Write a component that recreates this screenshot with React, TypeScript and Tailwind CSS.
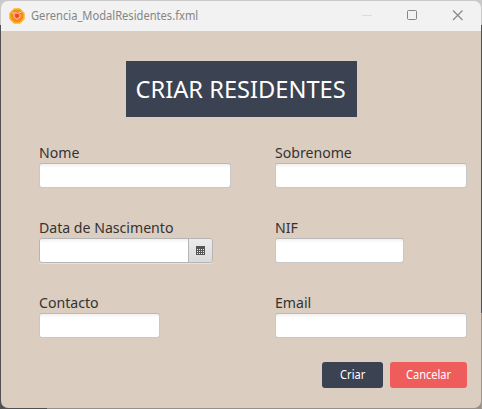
import type { ReactNode } from "react";

function AppIcon() {
  return (
    <svg width="16" height="16" viewBox="0 0 16 16" className="shrink-0">
      <path d="M5 .3h6L15.700 5v6L11 15.700H5L.3 11V5z" fill="#f9b626" />
      <circle cx="8" cy="8" r="6.500" fill="#fa8c12" />
      <path d="M3.800 4.700 8 4l4.300 1.200-.8 4.800L8 12.200 4.800 10z" fill="#f4611c" />
      <path d="M3 4.600 5 5.600 5 9.200 8 11.300 11 9.200 11 6M5 4.800l5 .4L12.500 4" fill="none" stroke="#ffe3d2" strokeWidth=".9" />
      <circle cx="8" cy="7.800" r="1.600" fill="#f2441b" />
    </svg>
  );
}

function TitleBar() {
  return (
    <header className="flex h-[30px] items-center bg-[#f2f2f2] pl-2">
      <AppIcon />
      <span className="ml-[6px] origin-left scale-x-[0.928] text-[12px] leading-4 whitespace-nowrap text-[#858585]">
        Gerencia_ModalResidentes.fxml
      </span>
      <svg width="120" height="30" viewBox="0 0 120 30" fill="none" className="ml-auto">
        <path d="M1 14.500h10" stroke="#dcdcdc" />
        <rect x="46.500" y="9.500" width="9" height="9" rx="1" stroke="#858585" />
        <path d="m92 9.500 9.500 9.500m0-9.500L92 19" stroke="#858585" strokeWidth="1.100" />
      </svg>
    </header>
  );
}

function Field({ label, children }: { label: string; children: ReactNode }) {
  return (
    <label className="flex h-[75px] flex-col items-start">
      <span className="h-5 origin-left scale-x-[0.94] text-[15px] leading-[18px] whitespace-nowrap text-[#333]">{label}</span>
      {children}
    </label>
  );
}

const box =
  "h-[25px] rounded-[3px] border border-[#c8c8c8] border-t-[#b9b9b9] bg-[linear-gradient(#f0f0f0,#fff_4px)] outline-none";

function DateBox() {
  return (
    <div className="flex h-[25px] w-[174px] overflow-hidden rounded-[3px] border border-[#b5b5b5] shadow-[0_1px_0_#e8e2dc]">
      <input className="w-[148px] bg-[linear-gradient(#f0f0f0,#fff_4px)] outline-none" />
      <span className="flex flex-1 items-center justify-center border-l border-[#b5b5b5] bg-linear-to-b from-[#ececec] to-[#dadada]">
        <svg width="9" height="9" viewBox="0 0 9 9" shapeRendering="crispEdges">
          <path d="M0 0h9v9H0z" fill="#555" />
          <path d="M1 3h1v1H1zm2 0h1v1H3zm2 0h1v1H5zm2 0h1v1H7zM1 5h1v1H1zm2 0h1v1H3zm2 0h1v1H5zm2 0h1v1H7zM1 7h1v1H1zm2 0h1v1H3zm2 0h1v1H5zm2 0h1v1H7z" fill="#eee" />
        </svg>
      </span>
    </div>
  );
}

export default function App() {
  return (
    <div className="flex h-[409px] w-[482px] bg-[linear-gradient(#c9c9c9_0_25px,#515053_25px_313px,#a0978f_313px)] font-['Noto_Sans',sans-serif]">
      <div className="w-px bg-[linear-gradient(#c9c9c9_0_25px,#515053_25px)]" />
      <div className="h-full w-[480px] bg-[linear-gradient(90deg,#515053_0_46px,#969089_46px)] bg-[length:100%_20px] bg-bottom bg-no-repeat py-px">
        <main className="flex h-[407px] flex-col overflow-hidden rounded-[7px] bg-[#dbcdc0]">
          <TitleBar />
          <h1 className="mt-[30px] flex h-14 w-[231px] items-center justify-center self-center bg-[#3b4252] text-[24px] leading-none whitespace-nowrap text-white">
            <span className="scale-x-[0.985]">CRIAR RESIDENTES</span>
          </h1>
          <form className="mt-[26px] ml-[38px] grid grid-cols-[236px_192px]">
            <Field label="Nome"><input className={`${box} w-48`} /></Field>
            <Field label="Sobrenome"><input className={`${box} w-48`} /></Field>
            <Field label="Data de Nascimento"><DateBox /></Field>
            <Field label="NIF"><input className={`${box} w-[129px]`} /></Field>
            <Field label="Contacto"><input className={`${box} w-[121px]`} /></Field>
            <Field label="Email"><input className={`${box} w-48`} /></Field>
          </form>
          <div className="mt-[-6px] mr-[14px] flex justify-end gap-[7px] text-[12px] text-white">
            <button className="h-[26px] w-[61px] rounded-[3px] bg-[#3b4252]">
              <span className="inline-block scale-x-[0.92]">Criar</span>
            </button>
            <button className="h-[26px] w-[77px] rounded-[3px] bg-[#ef5c5c]">
              <span className="inline-block scale-x-[0.92]">Cancelar</span>
            </button>
          </div>
        </main>
      </div>
    </div>
  );
}
